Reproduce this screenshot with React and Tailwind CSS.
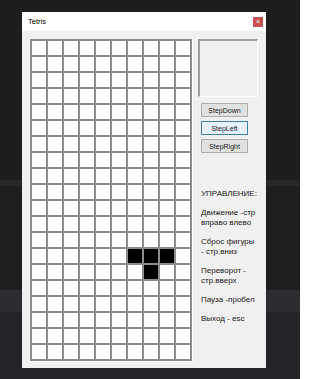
const ROWS = 20;
const COLS = 10;
const filled = new Set(["13-6", "13-7", "13-8", "14-7"]);

const help = [
  ["УПРАВЛЕНИЕ:"],
  ["Движение -стр", "вправо влево"],
  ["Сброс фигуры", "- стр.вниз"],
  ["Переворот -", "стр.вверх"],
  ["Пауза -пробел"],
  ["Выход - esc"],
];

function Board() {
  const cells = [];
  for (let r = 0; r < ROWS; r++) {
    for (let c = 0; c < COLS; c++) {
      const on = filled.has(`${r}-${c}`);
      cells.push(
        <div key={`${r}-${c}`} className={on ? "w-[14px] h-[14px] bg-black" : "w-[14px] h-[14px] bg-white"} />
      );
    }
  }
  return (
    <div className="grid grid-cols-[repeat(10,14px)] grid-rows-[repeat(20,14px)] gap-[2px] p-[2px] bg-[#8c8c8c] shadow-[1px_1px_0_#ffffff]">
      {cells}
    </div>
  );
}

function StepButton({ label, active }) {
  return (
    <button
      className={
        active
          ? "w-[47px] h-[14px] bg-[#e5f1fb] border border-[#3c7fb1] text-[7px] leading-none text-[#1a1a1a]"
          : "w-[47px] h-[14px] bg-[#e1e1e1] border border-[#adadad] text-[7px] leading-none text-[#1a1a1a]"
      }
    >
      {label}
    </button>
  );
}

export default function App() {
  return (
    <div
      className="w-[300px] h-[379px] overflow-hidden pt-[12px] pl-[22px] bg-[linear-gradient(to_bottom,#1d1d1d_0px,#1d1d1d_180px,#262626_180px,#262626_186px,#1e1e1e_186px,#1e1e1e_290px,#2c2c31_290px,#2c2c31_312px,#242428_312px,#242428_379px)]"
      style={{ fontFamily: '"Liberation Sans", Arial, sans-serif' }}
    >
      <div className="w-[244px] h-[356px] flex flex-col bg-[#f0f0f0]">
        {/* title bar */}
        <div className="h-[19px] bg-white flex items-center justify-between pl-[6px] pr-[3px]">
          <span className="text-[7.5px] text-black">Tetris</span>
          <div className="w-[10px] h-[10px] bg-[#c75050] flex items-center justify-center text-white text-[7px] leading-none">
            ×
          </div>
        </div>

        {/* body */}
        <div className="flex-1 flex items-start pl-[8px] pt-[8px]">
          <Board />

          <div className="ml-[6px] flex flex-col">
            <div className="w-[60px] h-[58px] border-t-2 border-l-2 border-[#a0a0a0] border-r border-b border-r-[#ffffff] border-b-[#ffffff]" />

            <div className="ml-[3px] mt-[6px] flex flex-col gap-[4px]">
              <StepButton label="StepDown" />
              <StepButton label="StepLeft" active />
              <StepButton label="StepRight" />
            </div>

            <div className="mt-[36px] pl-[3px] flex flex-col gap-[9px] text-[8px] leading-[10px] text-[#1a1a1a]">
              {help.map((lines, i) => (
                <div key={i}>
                  {lines.map((l) => (
                    <div key={l}>{l}</div>
                  ))}
                </div>
              ))}
            </div>
          </div>
        </div>
      </div>
    </div>
  );
}
